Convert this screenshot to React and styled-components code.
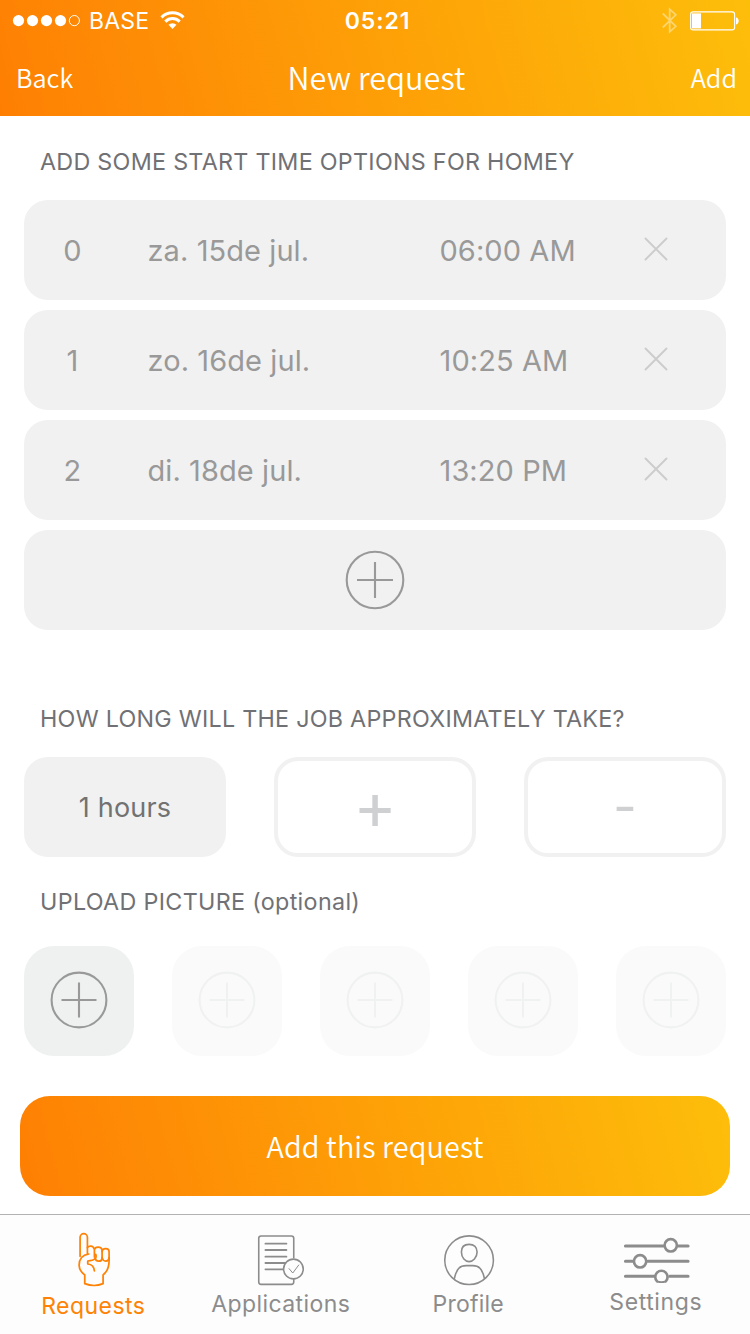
import React from "react";
import styled, { createGlobalStyle } from "styled-components";

const GlobalStyle = createGlobalStyle`
  * { box-sizing: border-box; }
  body { margin: 0; background: #fff; }
  button { border: 0; background: none; padding: 0; margin: 0; color: inherit; font: inherit; letter-spacing: inherit; }
`;

const ui = `"Inter", "Liberation Sans", sans-serif`;
const brand = `"Noto Sans CJK SC", "Noto Sans", sans-serif`;
const gradient = "linear-gradient(75deg, #fe7e02 0%, #fe8304 5%, #fdbc0a 97%, #fdbe0a 100%)";

const Screen = styled.div`
  width: 750px;
  height: 1334px;
  display: flex;
  flex-direction: column;
  overflow: hidden;
  background: #fff;
  font-family: ${ui};
`;

const Header = styled.header`
  height: 116px;
  flex: none;
  color: #fff;
  background: ${gradient};
`;

const StatusBar = styled.div`
  height: 41px;
  display: grid;
  grid-template-columns: 1fr auto 1fr;
  align-items: center;
  padding: 0 11px 0 12px;
  font-size: 23px;
  line-height: 28px;
`;

const StatusGroup = styled.div`
  display: flex;
  align-items: center;
  gap: ${(p) => p.$gap || 0}px;
  justify-content: ${(p) => (p.$end ? "flex-end" : "flex-start")};
`;

const Carrier = styled.span`
  margin: 0 11px 0 7px;
  letter-spacing: 0.2px;
`;

const Clock = styled.time`
  font-weight: 600;
  letter-spacing: 0.9px;
  padding-left: 4px;
`;

const NavBar = styled.nav`
  height: 72px;
  display: grid;
  grid-template-columns: 1fr auto 1fr;
  align-items: center;
  padding: 0 13px 0 16px;
  font-family: ${brand};
  font-weight: 350;
`;

const NavButton = styled.button`
  justify-self: ${(p) => (p.$end ? "end" : "start")};
  font-size: 25.3px;
  line-height: 36px;
  letter-spacing: 0;
`;

const Title = styled.h1`
  margin: 0;
  font-size: 30.6px;
  font-weight: 350;
  line-height: 40px;
  letter-spacing: 0.1px;
`;

const Main = styled.main`
  flex: 1;
  padding: 0 24px;
`;

const SectionTitle = styled.h2`
  margin: 0 0 0 16px;
  padding-top: ${(p) => p.$top}px;
  height: ${(p) => p.$height}px;
  font-size: 23.3px;
  font-weight: 400;
  line-height: 28px;
  letter-spacing: ${(p) => p.$spacing || 0.28}px;
  color: #707175;
  white-space: nowrap;
`;

const OptionList = styled.div`
  display: flex;
  flex-direction: column;
  gap: 10px;
`;

const OptionRow = styled.div`
  height: 100px;
  display: grid;
  grid-template-columns: 19px 292px 1fr 59px;
  align-items: center;
  padding: 2px 22px 0 39px;
  border-radius: 24px;
  background: #f1f1f1;
  color: #999;
  font-size: 29px;
  line-height: 36px;
  letter-spacing: 0.08px;
  white-space: nowrap;
`;

const OptionIndex = styled.span`
  text-align: center;
`;

const OptionDay = styled.span`
  padding-left: 65.5px;
`;

const OptionTime = styled.span`
  padding-left: 65.5px;
`;

const RemoveButton = styled.button`
  display: flex;
  margin: -5px 0 0 -1px;
  color: #ccc;
`;

const AddOption = styled.button`
  height: 100px;
  display: flex;
  align-items: center;
  justify-content: center;
  border-radius: 24px;
  background: #f1f1f1;
  color: #999;
`;

const Duration = styled.div`
  display: grid;
  grid-template-columns: repeat(3, 202px);
  gap: 48px;
`;

const DurationValue = styled.div`
  height: 100px;
  display: flex;
  align-items: center;
  justify-content: center;
  border-radius: 24px;
  background: #f1f1f1;
  color: #727272;
  font-size: 27px;
  letter-spacing: 0.2px;
`;

const StepButton = styled.button`
  height: 100px;
  display: flex;
  align-items: center;
  justify-content: center;
  padding-bottom: ${(p) => p.$lift}px;
  border: 4px solid #f1f1f1;
  border-radius: 24px;
  color: #cfd0d2;
  font-size: ${(p) => p.$size}px;
  font-weight: 400;
  line-height: 60px;
`;

const Uploads = styled.div`
  display: flex;
  justify-content: space-between;
`;

const UploadTile = styled.button`
  width: 110px;
  height: 110px;
  display: flex;
  align-items: center;
  justify-content: center;
  padding: 0 0 3px 0;
  border-radius: 30px;
  background: ${(p) => (p.$active ? "#eff1f1" : "#fafafa")};
  color: ${(p) => (p.$active ? "#999" : "#f0f1f1")};
`;

const Submit = styled.button`
  display: block;
  width: 710px;
  height: 100px;
  margin: 40px -4px 0;
  padding-bottom: 2px;
  border-radius: 30px;
  background: ${gradient};
  color: #fff;
  font-family: ${brand};
  font-size: 28.8px;
  font-weight: 350;
  letter-spacing: 0.1px;
`;

const TabBar = styled.nav`
  height: 120px;
  flex: none;
  display: grid;
  grid-template-columns: repeat(4, 1fr);
  padding-top: 17px;
  border-top: 1px solid #b2b2b2;
  background: #fdfdfd;
`;

const Tab = styled.button`
  display: flex;
  flex-direction: column;
  align-items: center;
  color: ${(p) => (p.$active ? "#ff8205" : "#8c8c8c")};
  font-size: 23px;
  line-height: 28px;
  letter-spacing: ${(p) => p.$spacing}px;
`;

const TabLabel = styled.span`
  margin-right: 1px;
`;

const Icon = styled.svg`
  display: block;
  flex: none;
  overflow: visible;
  fill: none;
  stroke: currentColor;
  stroke-linecap: ${(p) => (p.$butt ? "butt" : "round")};
  stroke-linejoin: ${(p) => (p.$butt ? "miter" : "round")};
`;

const CirclePlus = ({ radius, arm }) => (
  <Icon $butt width="60" height="60" viewBox="-30 -30 60 60" strokeWidth="2.1">
    <circle r={radius} />
    <path d={`M${-arm} 0H${arm}M0 ${-arm}V${arm}`} />
  </Icon>
);

const Signal = () => (
  <Icon width="70" height="14" viewBox="0 0 70 14">
    {[6.5, 20.5, 34.5, 48.5].map((x) => (
      <circle key={x} cx={x} cy="6.6" r="5.6" fill="#fff" stroke="none" />
    ))}
    <circle cx="62.4" cy="6.6" r="5.1" strokeWidth="1" />
  </Icon>
);

const Wifi = () => (
  <Icon $butt width="25" height="18" viewBox="0 0 25 18" strokeWidth="3">
    <path d="M1.5 5.4a15.6 15.6 0 0 1 22 0" />
    <path d="M5.3 9.6a10.2 10.2 0 0 1 14.4 0" />
    <path d="M12.5 17l-4-4.2a5.7 5.7 0 0 1 8 0z" fill="#fff" stroke="none" />
  </Icon>
);

const Bluetooth = () => (
  <Icon $butt width="16" height="27" viewBox="0 0 16 27" strokeWidth="1.8" opacity="0.4">
    <path d="M.8 6.5L13.8 19.3 7.7 24.8V2.2L13.8 7.8.8 20.5" />
  </Icon>
);

const Battery = () => (
  <Icon width="49" height="20" viewBox="0 0 49 20">
    <rect x=".6" y=".9" width="44" height="18" rx="2.5" strokeWidth="1.1" />
    <rect x="2" y="2.4" width="9" height="15" fill="#fff" stroke="none" />
    <path d="M46 6.6c3.6.3 3.6 6.5 0 6.8z" fill="#fff" stroke="none" />
  </Icon>
);

const Cross = () => (
  <Icon width="24" height="24" viewBox="0 0 24 24" strokeWidth="1.9">
    <path d="M1.5 1.5l21 21M22.5 1.5l-21 21" />
  </Icon>
);

const Hand = () => (
  <Icon width="80" height="60" viewBox="71.75 81 240 180" strokeWidth="5.2">
    <path d="M150 154V97a11 11 0 0 1 22 0v50" />
    <path d="M176 147C156 150 147 162 147 181c0 13 8 22 17 29v26q28 11 55 0v-26c12-10 18-23 18-43V140c0-12-20-13-21 0" />
    <path d="M172 128c4-7 17-7 20 3M197 148c4 12-3 18-24 20v9c12 1 19 8 20 21" />
    <path d="M193 156V134c2-10 21-10 23 1v25c-1 11-18 12-21 0" />
    <path d="M216 158c3 14 20 13 21 0" />
  </Icon>
);

const Document = () => (
  <Icon width="80" height="58" viewBox="123.75 81 240 174" strokeWidth="4.8">
    <path d="M282 158V100q0-7-7-7h-91q-7 0-7 7v131q0 7 7 7h91q7 0 7-7v-7" />
    <path d="M197 116h63M197 135h63M197 155h63M197 174h60M197 193h52" strokeWidth="5.4" />
    <circle cx="281" cy="192" r="29.5" />
    <path d="M268 191l11 13 18-24" strokeWidth="3" />
  </Icon>
);

const Person = () => (
  <Icon width="80" height="58" viewBox="86.75 81 240 174" strokeWidth="4.8">
    <circle cx="207" cy="165.5" r="73" />
    <path d="M207 118c-15 0-23 9-23 23 0 17 12 29 23 29s24-12 24-29c0-14-9-23-24-23z" />
    <path d="M163 220c7-30 17-38 35-38h20c18 0 28 8 35 38" />
  </Icon>
);

const Sliders = () => (
  <Icon width="80" height="56" viewBox="78.75 81 240 168" strokeWidth="9">
    <path d="M107 123h113M266 123h29M107 169h22M174 169h121M107 214h87M240 214h55" />
    <g strokeWidth="8">
      <circle cx="243" cy="121" r="18.5" />
      <circle cx="151" cy="169" r="18.5" />
      <path d="M202 229a18.5 18.5 0 1 1 26 0" />
      <path d="M203 230q12 3 24 0" strokeWidth="5" />
    </g>
  </Icon>
);

const options = [
  { day: "za. 15de jul.", time: "06:00 AM" },
  { day: "zo. 16de jul.", time: "10:25 AM" },
  { day: "di. 18de jul.", time: "13:20 PM" },
];

const tabs = [
  { label: "Requests", icon: <Hand />, active: true, spacing: 0.45 },
  { label: "Applications", icon: <Document />, spacing: 0.4 },
  { label: "Profile", icon: <Person />, spacing: 0.25 },
  { label: "Settings", icon: <Sliders />, spacing: 0.6 },
];

export default function App() {
  return (
    <Screen>
      <GlobalStyle />
      <Header>
        <StatusBar>
          <StatusGroup>
            <Signal />
            <Carrier>BASE</Carrier>
            <Wifi />
          </StatusGroup>
          <Clock>05:21</Clock>
          <StatusGroup $end $gap={12}>
            <Bluetooth />
            <Battery />
          </StatusGroup>
        </StatusBar>
        <NavBar>
          <NavButton>Back</NavButton>
          <Title>New request</Title>
          <NavButton $end>Add</NavButton>
        </NavBar>
      </Header>

      <Main>
        <SectionTitle $top={32} $height={84}>ADD SOME START TIME OPTIONS FOR HOMEY</SectionTitle>
        <OptionList>
          {options.map((option, index) => (
            <OptionRow key={option.day}>
              <OptionIndex>{index}</OptionIndex>
              <OptionDay>{option.day}</OptionDay>
              <OptionTime>{option.time}</OptionTime>
              <RemoveButton aria-label="Remove">
                <Cross />
              </RemoveButton>
            </OptionRow>
          ))}
          <AddOption aria-label="Add option">
            <CirclePlus radius={28.3} arm={18} />
          </AddOption>
        </OptionList>

        <SectionTitle $top={75} $height={127} $spacing={0.26}>HOW LONG WILL THE JOB APPROXIMATELY TAKE?</SectionTitle>
        <Duration>
          <DurationValue>1 hours</DurationValue>
          <StepButton $size={66} $lift={5}>+</StepButton>
          <StepButton $size={52} $lift={0}>-</StepButton>
        </Duration>

        <SectionTitle $top={31} $height={89} $spacing={0.33}>UPLOAD PICTURE (optional)</SectionTitle>
        <Uploads>
          {[0, 1, 2, 3, 4].map((slot) => (
            <UploadTile key={slot} $active={slot === 0} aria-label="Upload">
              <CirclePlus radius={27.4} arm={17.5} />
            </UploadTile>
          ))}
        </Uploads>
        <Submit>Add this request</Submit>
      </Main>

      <TabBar>
        {tabs.map((tab) => (
          <Tab key={tab.label} $active={tab.active} $spacing={tab.spacing}>
            {tab.icon}
            <TabLabel>{tab.label}</TabLabel>
          </Tab>
        ))}
      </TabBar>
    </Screen>
  );
}
